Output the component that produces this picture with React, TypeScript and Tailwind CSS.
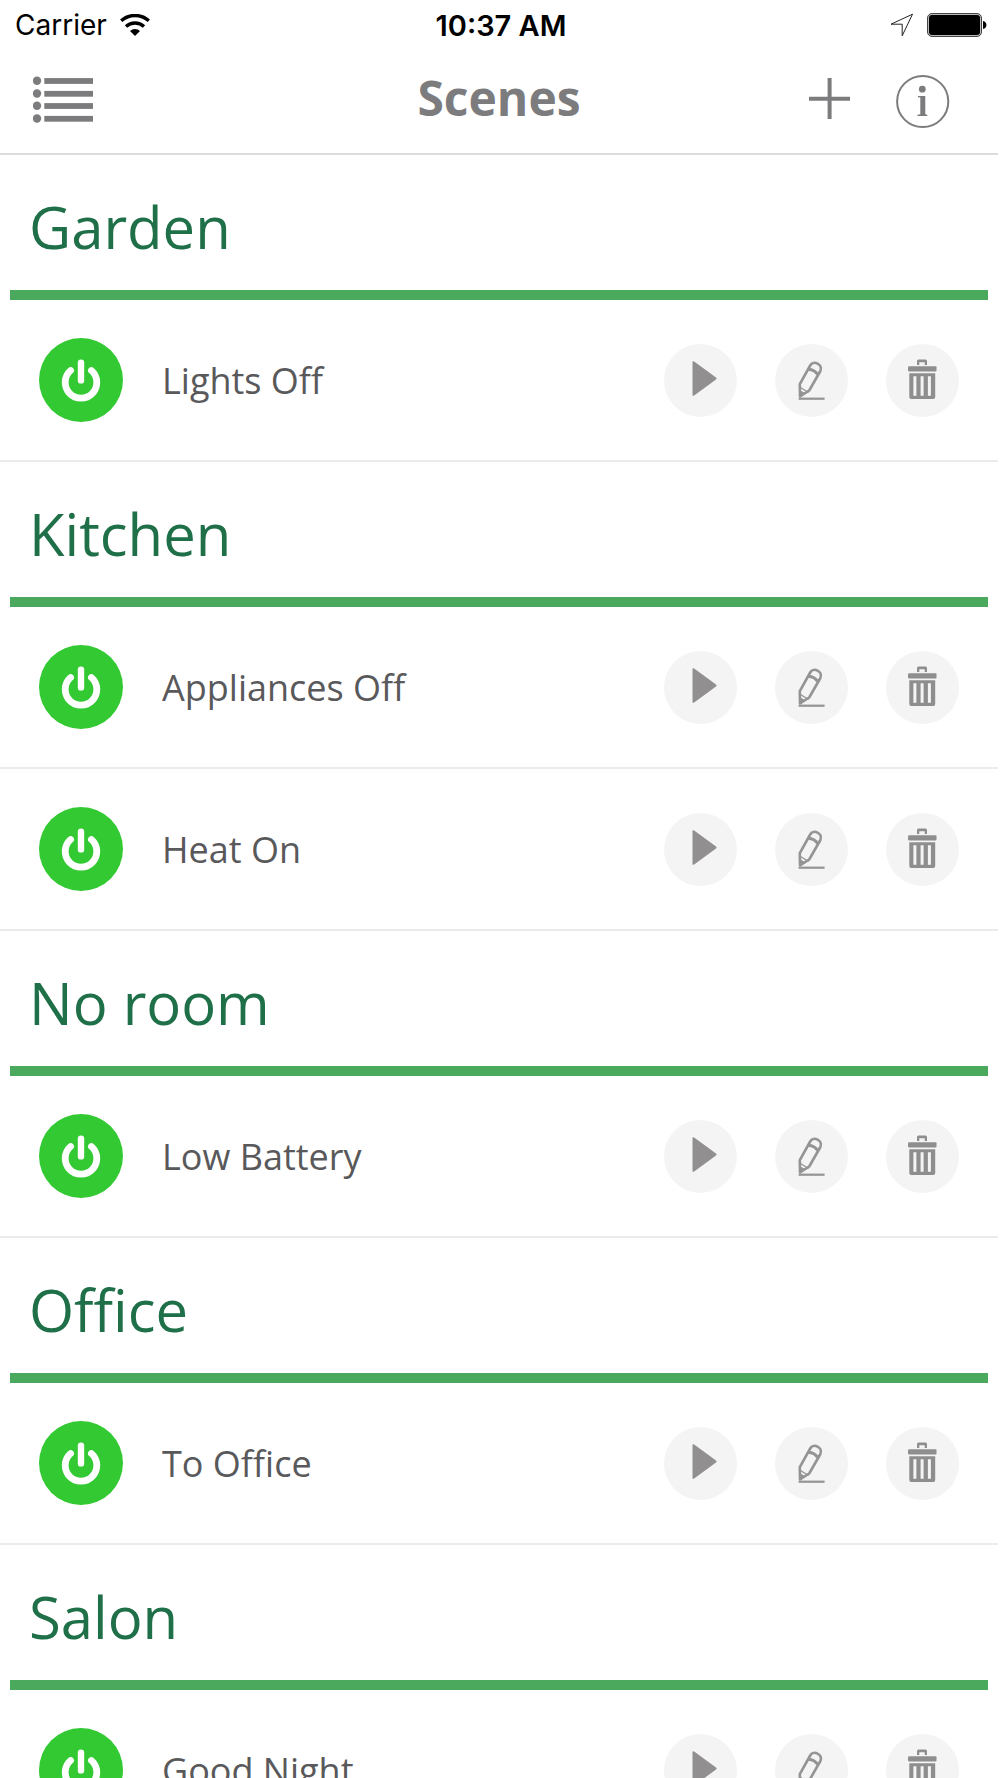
import { ReactNode, useState } from "react";

type Scene = { id: number; name: string };
type Room = { title: string; scenes: Scene[] };

const rooms: Room[] = [
  { title: "Garden", scenes: [{ id: 1, name: "Lights Off" }] },
  {
    title: "Kitchen",
    scenes: [
      { id: 2, name: "Appliances Off" },
      { id: 3, name: "Heat On" },
    ],
  },
  { title: "No room", scenes: [{ id: 4, name: "Low Battery" }] },
  { title: "Office", scenes: [{ id: 5, name: "To Office" }] },
  { title: "Salon", scenes: [{ id: 6, name: "Good Night" }] },
];

const WifiIcon = () => (
  <svg width="30" height="22" viewBox="0 0 30 22" fill="none">
    <path d="M1.2 6.800a20.500 20.500 0 0 1 27.600 0" stroke="#000" strokeWidth="3.400" />
    <path d="M6 12.400a13.400 13.400 0 0 1 18 0" stroke="#000" strokeWidth="3.400" />
    <path d="M10 17a7 7 0 0 1 10 0L15 22z" fill="#000" />
  </svg>
);

const LocationIcon = () => (
  <svg width="24" height="24" viewBox="0 0 24 24" fill="none">
    <path
      d="M22.5 1.2 1 11.2h11.2v11.6z"
      stroke="#222"
      strokeWidth="1"
      strokeLinejoin="round"
    />
  </svg>
);

const BatteryIcon = () => (
  <svg width="60" height="24" viewBox="0 0 60 24">
    <rect x="0.5" y="0.5" width="54" height="23" rx="4.5" fill="#bbb" stroke="#444" />
    <rect x="2" y="2" width="51" height="20" rx="3" fill="#000" />
    <path d="M56 8c4.600 1 4.600 7 0 8z" fill="#000" />
  </svg>
);

const MenuIcon = () => (
  <svg width="60" height="60" viewBox="0 0 60 60" fill="#7c7c7e">
    {[12, 24.8, 37, 49.8].map((y) => (
      <g key={y}>
        <circle cx="4" cy={y - 0.3} r="4.2" />
        <rect x="11.3" y={y - 2.9} width="48.7" height="5.8" />
      </g>
    ))}
  </svg>
);

const PlusIcon = () => (
  <svg width="60" height="60" viewBox="0 0 60 60" stroke="#7c7c7e" strokeWidth="4">
    <path d="M9 29.7h41M29.6 9v41" />
  </svg>
);

const InfoIcon = () => (
  <svg width="60" height="60" viewBox="0 0 60 60" fill="#7c7c7e">
    <circle cx="29.7" cy="32.5" r="25.6" fill="none" stroke="#7c7c7e" strokeWidth="2" />
    <circle cx="29.3" cy="20.2" r="3.4" />
    <path d="M25 27h7.300v18.200l2 .5v1.300h-9.800v-1.300l2.800-.5V28.600L25 28.300z" />
  </svg>
);

const PowerIcon = () => (
  <svg width="84" height="84" viewBox="0 0 84 84" fill="none" stroke="#fff" strokeLinecap="round">
    <path d="M42 24.600v17.800" strokeWidth="6.4" />
    <path d="M31.600 32.500a15.800 15.800 0 1 0 20.800 0" strokeWidth="6.8" />
  </svg>
);

const PlayIcon = () => (
  <svg width="73" height="73" viewBox="0 0 73 73" fill="#918f90">
    <path d="M28.500 17.500q1-.5 2 .3l21.500 15.700q1.300 1 0 2L30.500 51.300q-1 .7-2 .2z" />
  </svg>
);

const PencilIcon = () => (
  <svg width="73" height="73" viewBox="0 0 73 73" fill="none" stroke="#949494" strokeWidth="2.6" strokeLinejoin="round">
    <path d="M24.800 40.200 35.200 21.500c3-5.500 13-1.500 10.200 5.500L34.200 46.500l-9.200 5.800z" />
    <path d="M33.300 25.200c4 .3 7.300 2 9.300 5.200" strokeWidth="3" />
    <path d="M25.500 43.500l8 5" strokeWidth="1.4" />
    <path d="M24.500 45.800 30.500 49.600l-6 4z" fill="#949494" stroke="none" />
    <path d="M23.600 54.700h26" strokeWidth="2.2" />
  </svg>
);

const TrashIcon = () => (
  <svg width="73" height="73" viewBox="0 0 73 73" fill="#8e8e8e">
    <path d="M31 21v-4q0-1.500 1.500-1.500h7q1.500 0 1.500 1.500v4h-2.300v-2.700h-5.400v2.700z" />
    <path d="M23.500 22.200h26q1 0 1 1v3.300q0 1-1 1h-26q-1.500 0-1.500-1v-3.300q0-1 1.500-1z" />
    <path
      fillRule="evenodd"
      d="M23.300 29.300h25.900v23.700q0 2-2 2h-21.900q-2 0-2-2zM27.400 32.200v19.600h3V32.200zM34.600 32.200v19.600h3V32.200zM41.900 32.200v19.600h3V32.200z"
    />
  </svg>
);

const RoundButton = ({
  label,
  onClick,
  children,
}: {
  label: string;
  onClick?: () => void;
  children: ReactNode;
}) => (
  <button
    type="button"
    aria-label={label}
    onClick={onClick}
    className="size-[73px] rounded-full bg-[#f4f4f4]"
  >
    {children}
  </button>
);

const SceneRow = ({ scene }: { scene: Scene }) => {
  const [active, setActive] = useState(true);

  return (
    <li className="flex h-[162px] items-center border-b-2 border-[#ebebeb] pr-[39px] pl-[39px]">
      <button
        type="button"
        aria-label={`Toggle ${scene.name}`}
        aria-pressed={active}
        onClick={() => setActive(!active)}
        className={`size-[84px] shrink-0 rounded-full ${
          active ? "bg-[#33c933]" : "bg-[#c4c4c4]"
        }`}
      >
        <PowerIcon />
      </button>
      <span className="ml-[39px] flex-1 truncate pt-[2px] text-[36px] leading-[50px] text-[#59595b]">
        {scene.name}
      </span>
      <div className="flex gap-[38px]">
        <RoundButton label={`Run ${scene.name}`}>
          <PlayIcon />
        </RoundButton>
        <RoundButton label={`Edit ${scene.name}`}>
          <PencilIcon />
        </RoundButton>
        <RoundButton label={`Delete ${scene.name}`}>
          <TrashIcon />
        </RoundButton>
      </div>
    </li>
  );
};

const StatusBar = () => (
  <div className="grid h-[50px] grid-cols-[1fr_auto_1fr] items-center pr-[11px] pl-[15px] font-['Inter',sans-serif] text-[28px] leading-8 text-black">
    <div className="flex items-center gap-[13px]">
      <span>Carrier</span>
      <WifiIcon />
    </div>
    <span className="pt-[2px] text-[29px] font-semibold">10:37 AM</span>
    <div className="flex items-center justify-end gap-[13px]">
      <LocationIcon />
      <BatteryIcon />
    </div>
  </div>
);

export default function App() {
  return (
    <div className="flex h-screen flex-col bg-white pr-[2px] font-['Open_Sans',sans-serif]">
      <header className="shrink-0 border-b-2 border-[#dcdcdc]">
        <StatusBar />
        <div className="flex items-center pt-[19px] pr-[45px] pb-6 pl-[33px]">
          <div className="flex flex-1">
            <button type="button" aria-label="Menu">
              <MenuIcon />
            </button>
          </div>
          <h1 className="ml-3 self-start text-[48px] leading-[58px] font-bold text-[#7c7c7e]">
            Scenes
          </h1>
          <div className="flex flex-1 justify-end gap-[33px]">
            <button type="button" aria-label="Add scene">
              <PlusIcon />
            </button>
            <button type="button" aria-label="Info">
              <InfoIcon />
            </button>
          </div>
        </div>
      </header>
      <main className="min-h-0 flex-1 overflow-y-auto [scrollbar-width:none]">
        {rooms.map((room) => (
          <section key={room.title}>
            <div className="px-[10px]">
              <h2 className="border-b-[10px] border-[#4aa95c] px-[19px] pt-10 pb-8 text-[58px] leading-[63px] text-[#1f7049]">
                {room.title}
              </h2>
            </div>
            <ul>
              {room.scenes.map((scene) => (
                <SceneRow key={scene.id} scene={scene} />
              ))}
            </ul>
          </section>
        ))}
      </main>
    </div>
  );
}
